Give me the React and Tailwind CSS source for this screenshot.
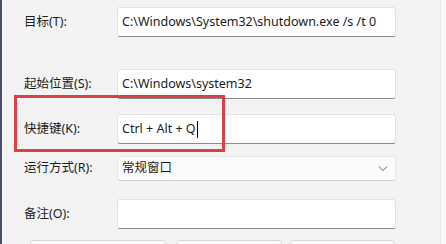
import React from 'react';

const FONT = { fontFamily: '"Noto Sans", "Noto Sans CJK SC", sans-serif' };

function Field({ label, children, className = '' }) {
  return (
    <div className={`flex items-center ${className}`}>
      <div className="w-[93px] shrink-0 text-[12.5px] text-[#1b1b1b]">{label}</div>
      {children}
    </div>
  );
}

function TextBox({ value, caret }) {
  return (
    <div className="w-[279px] h-[30px] flex items-center px-[4px] bg-white border border-[#e2e2e2] border-b-[#8a8a8a] rounded-[3px] text-[12.5px] text-[#1b1b1b] whitespace-nowrap">
      {value}
      {caret && <span className="w-px h-[17px] bg-black ml-px" />}
    </div>
  );
}

export default function App() {
  return (
    <div className="w-[446px] h-[244px] overflow-hidden flex bg-[#f3f3f3]" style={FONT}>
      {/* window edge */}
      <div className="w-[2px] shrink-0 bg-[#45506f]" />
      <div className="w-px shrink-0 bg-[#fbfbfb]" />

      <div className="relative w-[437px] shrink-0 pl-[21px] flex flex-col">
        <Field label="目标(T):" className="mt-[7px]">
          <TextBox value="C:\Windows\System32\shutdown.exe /s /t 0" />
        </Field>

        <div className="mt-[14px] h-px w-[372px] bg-[#a0a0a0]" />

        <Field label="起始位置(S):" className="mt-[18px]">
          <TextBox value="C:\Windows\system32" />
        </Field>

        <Field label="快捷键(K):" className="mt-[15px]">
          <TextBox value="Ctrl + Alt + Q" caret />
        </Field>

        <Field label="运行方式(R):" className="mt-[12px]">
          <div className="w-[279px] h-[25px] flex items-center justify-between pl-[4px] pr-[7px] bg-[#fbfbfb] border border-[#e6e6e6] border-b-[#cfcfcf] rounded-[3px] text-[12.5px] text-[#1b1b1b]">
            常规窗口
            <svg width="10" height="6" viewBox="0 0 10 6" fill="none" stroke="#5c5c5c" strokeWidth="1">
              <path d="M1 0.5 L5 4.5 L9 0.5" />
            </svg>
          </div>
        </Field>

        <Field label="备注(O):" className="mt-[18px]">
          <TextBox value="" />
        </Field>

        <div className="mt-[11px] flex pl-[6px] gap-[10px]">
          <div className="w-[136px] h-[30px] bg-[#fdfdfd] border border-[#d6d6d6] rounded-[4px]" />
          <div className="w-[106px] h-[30px] bg-[#fdfdfd] border border-[#d6d6d6] rounded-[4px]" />
          <div className="w-[105px] h-[30px] bg-[#fdfdfd] border border-[#d6d6d6] rounded-[4px] -ml-[2px]" />
        </div>

        {/* annotation box */}
        <div className="absolute left-[11px] top-[95px] w-[211px] h-[57px] border-[3px] border-[#d8414a]" />
      </div>

      <div className="w-px shrink-0 bg-[#e6e6e6]" />
      <div className="flex-1 bg-[#f9f9f9]" />
    </div>
  );
}
